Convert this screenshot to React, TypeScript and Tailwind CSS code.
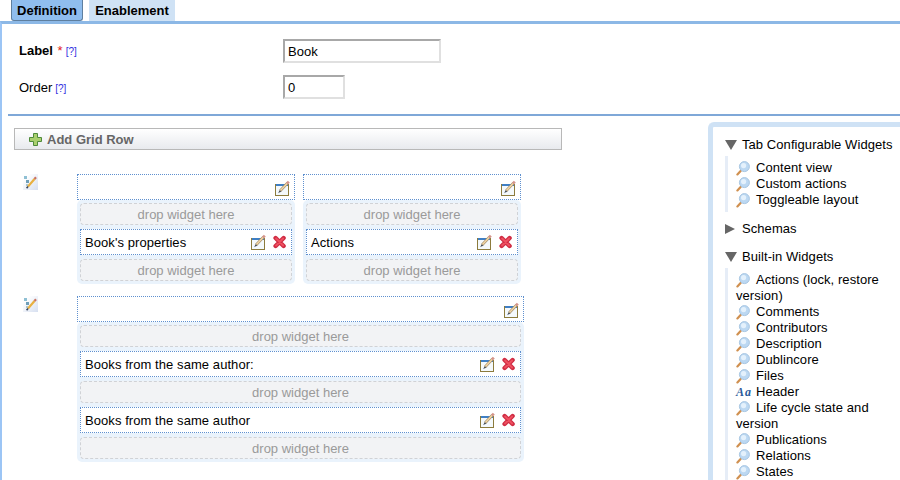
import type { ReactNode } from 'react';

const EditIcon = () => (
  <svg width="16" height="16" viewBox="0 0 16 16" className="shrink-0">
    <rect x="1.5" y="4.5" width="13" height="11" fill="#f4f9fc" stroke="#8c7b3c" />
    <rect x="2" y="4" width="12" height="2" fill="#3f7fc4" />
    <path d="M6 11 L13.5 3" stroke="#a08a68" strokeWidth="2.6" />
    <path d="M6.2 10.8 L13.5 3" stroke="#f2d6a4" strokeWidth="1.6" />
    <path d="M13 3.5 L14.8 1.6" stroke="#d4948a" strokeWidth="2.6" />
    <path d="M4.6 12.6 L6 10.6 L6.9 11.5 Z" fill="#24303e" stroke="#24303e" strokeWidth="0.4" />
  </svg>
);

const DeleteIcon = () => (
  <svg width="14" height="14" viewBox="0 0 14 14" className="shrink-0">
    <path d="M2.6 3 L10.6 11 M10.6 3 L2.6 11" stroke="#cf2b42" strokeWidth="4.4" strokeLinecap="round" />
    <path d="M3.1 3.5 L10.1 10.5 M10.1 3.5 L3.1 10.5" stroke="#ee5060" strokeWidth="2" strokeLinecap="round" />
  </svg>
);

const Magnifier = () => (
  <svg width="15" height="15" viewBox="0 0 15 15" className="shrink-0">
    <path d="M4.6 10 L1.4 13.4" stroke="#d09050" strokeWidth="2.2" strokeLinecap="round" />
    <circle cx="8.4" cy="5.6" r="5" fill="#bcd8f2" stroke="#a8c6e2" />
    <circle cx="7.6" cy="4.6" r="2.6" fill="#e4f1fc" />
  </svg>
);

const PlusIcon = () => (
  <svg width="13" height="13" viewBox="0 0 13 13" className="shrink-0">
    <path d="M4.5 0.5 H8.5 V4.5 H12.5 V8.5 H8.5 V12.5 H4.5 V8.5 H0.5 V4.5 H4.5 Z" fill="#a9cf6e" stroke="#4f8a3a" />
  </svg>
);

const RowIcon = () => (
  <svg width="15" height="16" viewBox="0 0 15 16" className="shrink-0">
    <defs>
      <linearGradient id="rowbg" x1="0" y1="0" x2="1" y2="1">
        <stop offset="0.2" stopColor="#ffffff" />
        <stop offset="1" stopColor="#d6dff0" />
      </linearGradient>
    </defs>
    <rect width="15" height="16" fill="url(#rowbg)" />
    <rect x="1" y="2" width="3" height="3" fill="#8fc0d4" />
    <rect x="3" y="6" width="3" height="3" fill="#6f9fb8" />
    <rect x="3" y="10" width="2" height="2" fill="#a8c8d8" />
    <path d="M5 12.5 L11.5 5" stroke="#e8b040" strokeWidth="2.2" />
    <path d="M11.5 5 L13 3.2" stroke="#c87060" strokeWidth="2.2" />
    <path d="M3.6 14.2 L5 12.5" stroke="#33415a" strokeWidth="1.6" />
  </svg>
);

const Help = () => <span className="text-[10px] text-[#3030e0] ml-[3px]">[?]</span>;

const DropZone = () => (
  <div className="h-[22px] pt-[1px] rounded-[4px] border border-dashed border-[#d0d2d6] bg-[#f2f3f5] flex items-center justify-center text-[13px] text-[#9a9a9a]">
    drop widget here
  </div>
);

const Widget = ({ title }: { title: string }) => (
  <div className="h-[26px] border border-dotted border-[#5f90cf] bg-white flex items-center pl-[4px] pr-[4px] text-[13px] tracking-[0.07px] text-black">
    <span className="flex-1 pt-[2px]">{title}</span>
    <span className="flex items-center gap-[7px]">
      <EditIcon />
      <DeleteIcon />
    </span>
  </div>
);

const Cell = ({ widgets, className }: { widgets: string[]; className: string }) => (
  <div className={className}>
    <div className="h-[26px] border border-dotted border-[#5f90cf] bg-white flex items-center justify-end pr-[4px] pt-[2px]">
      <EditIcon />
    </div>
    <div className="rounded-[5px] bg-[#eaf3fc] p-[3px] flex flex-col gap-[4px]">
      <DropZone />
      {widgets.map((w) => (
        <div key={w} className="flex flex-col gap-[4px]">
          <Widget title={w} />
          <DropZone />
        </div>
      ))}
    </div>
  </div>
);

const Row = ({ children, className = '' }: { children: ReactNode; className?: string }) => (
  <div className={`flex ${className}`}>
    <div className="w-[63px] pl-[9px] shrink-0">
      <RowIcon />
    </div>
    {children}
  </div>
);

const Section = ({ title, open, children }: { title: string; open?: boolean; children?: ReactNode }) => (
  <div className={open ? 'mb-[9px]' : 'mb-[12px]'}>
    <div className="flex items-center h-[16px] text-[13px] tracking-[0.07px] text-black">
      {open ? (
        <span className="w-0 h-0 border-x-[6px] border-x-transparent border-t-[10px] border-t-[#666]" />
      ) : (
        <span className="w-0 h-0 border-y-[5.5px] border-y-transparent border-l-[10px] border-l-[#666] mr-[2px]" />
      )}
      <span className="ml-[5px] whitespace-nowrap">{title}</span>
    </div>
    {children && <div className="border-l-[3px] border-[#e6edf7] mt-[3px] pl-[8px] py-[4px]">{children}</div>}
  </div>
);

const Item = ({ label, header }: { label: string; header?: boolean }) => (
  <div className="text-[13px] leading-[16px] tracking-[0.07px] text-black">
    {header ? (
      <span className="inline-block w-[20px] text-[12px] leading-[14px] tracking-[1px] italic font-bold text-[#2a5a9a] font-['Liberation_Serif',serif]">
        Aa
      </span>
    ) : (
      <span className="inline-flex align-[-4px] w-[20px]">
        <Magnifier />
      </span>
    )}
    {label}
  </div>
);

export default function App() {
  return (
    <div className="w-[900px] h-[480px] overflow-hidden bg-white font-['Liberation_Sans',Arial,sans-serif] text-[13px] text-black">
      <div className="flex items-end h-[21px] pl-[11px] gap-[6px] font-bold">
        <div className="h-[21px] w-[72px] pt-[1px] flex items-center justify-center rounded-b-[3px] border border-t-0 border-[#5f7f9f] bg-[#8fbdee]">
          Definition
        </div>
        <div className="h-[21px] w-[86px] flex items-center justify-center bg-[#cfe2f5]">Enablement</div>
      </div>
      <div className="h-[459px] border-t-[3px] border-[#8cb8e6] border-l-[2px] border-l-[#9cc5f5]">
        <div className="h-[90px] pl-[17px] pt-[15px]">
          <div className="flex items-center h-[24px]">
            <div className="w-[264px]">
              <span className="font-bold">Label</span> <span className="text-[#e02020] ml-[1px]">*</span>
              <Help />
            </div>
            <input
              readOnly
              value="Book"
              className="w-[158px] h-[24px] border-2 border-[#a8a8a8] border-r-[#e0e0e0] border-b-[#e0e0e0] px-[3px] text-[13px] outline-none"
            />
          </div>
          <div className="flex items-center h-[24px] mt-[12px]">
            <div className="w-[264px] pt-[1px]">
              Order
              <Help />
            </div>
            <input
              readOnly
              value="0"
              className="w-[62px] h-[24px] border-2 border-[#a8a8a8] border-r-[#e0e0e0] border-b-[#e0e0e0] px-[3px] text-[13px] outline-none"
            />
          </div>
        </div>
        <div className="h-[2px] bg-[#7fa8d8] ml-[6px]" />
        <div className="flex">
          <div className="w-[706px] shrink-0 pl-[12px] pt-[12px]">
            <div className="w-[548px] h-[22px] pt-[1px] border border-[#b8b8b8] bg-linear-to-b from-white to-[#e8eaee] flex items-center gap-[5px] pl-[14px] font-bold text-[#666]">
              <PlusIcon />
              Add Grid Row
            </div>
            <Row className="mt-[24px]">
              <div className="flex gap-[8px]">
                <Cell className="w-[218px]" widgets={["Book's properties"]} />
                <Cell className="w-[218px]" widgets={['Actions']} />
              </div>
            </Row>
            <Row className="mt-[12px]">
              <Cell className="w-[447px]" widgets={['Books from the same author:', 'Books from the same author']} />
            </Row>
          </div>
          <div className="flex-1 mt-[6px] border-l-[5px] border-t-[5px] border-[#cfe2f5] rounded-tl-[6px] pl-[12px] pt-[10px] min-w-0">
            <Section title="Tab Configurable Widgets" open>
              <Item label="Content view" />
              <Item label="Custom actions" />
              <Item label="Toggleable layout" />
            </Section>
            <Section title="Schemas" />
            <Section title="Built-in Widgets" open>
              <Item label="Actions (lock, restore version)" />
              <Item label="Comments" />
              <Item label="Contributors" />
              <Item label="Description" />
              <Item label="Dublincore" />
              <Item label="Files" />
              <Item label="Header" header />
              <Item label="Life cycle state and version" />
              <Item label="Publications" />
              <Item label="Relations" />
              <Item label="States" />
            </Section>
          </div>
        </div>
      </div>
    </div>
  );
}
